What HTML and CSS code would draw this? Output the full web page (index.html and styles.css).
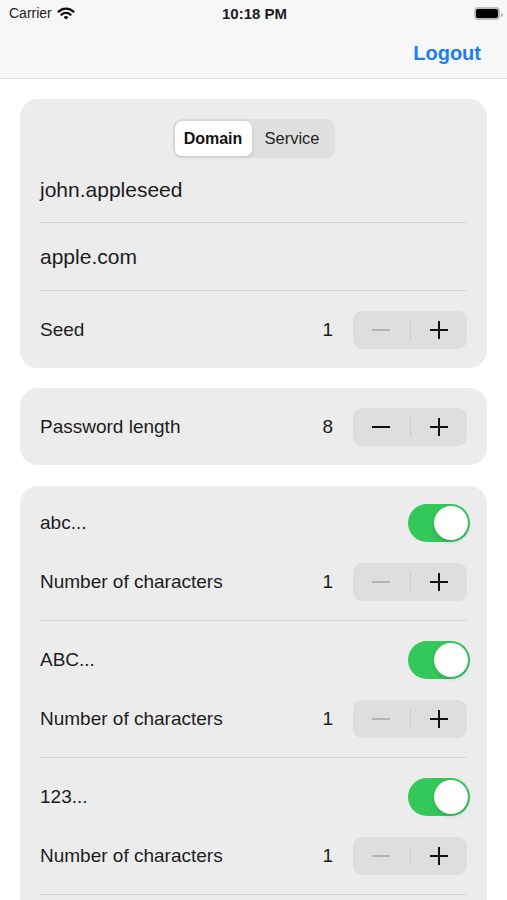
FILE: index.html
```html
<!DOCTYPE html>
<html lang="en">
<head>
  <meta charset="UTF-8" />
  <meta name="viewport" content="width=device-width, initial-scale=1.0"/>
  <title>Password Generator</title>
  <link rel="stylesheet" href="styles.css">
</head>
<body>

  <header class="topbar">
    <div class="status-bar">
      <div class="carrier">
        Carrier
        <svg class="wifi" width="18" height="13" viewBox="0 0 18 13">
          <path d="M1.6 4.6 A10.5 10.5 0 0 1 16.4 4.6" fill="none" stroke="#111" stroke-width="2.3" stroke-linecap="round"/>
          <path d="M4.5 7.6 A6.5 6.5 0 0 1 13.5 7.6" fill="none" stroke="#111" stroke-width="2.3" stroke-linecap="round"/>
          <path d="M9 12.6 L6.6 10.2 A3.4 3.4 0 0 1 11.4 10.2 Z" fill="#111"/>
        </svg>
      </div>
      <div class="clock">10:18 PM</div>
      <div class="battery"><span class="battery-fill"></span></div>
    </div>
    <nav class="nav-bar">
      <a class="logout" href="#">Logout</a>
    </nav>
  </header>

  <main class="content">

    <section class="card">
      <div class="segmented">
        <div class="segment selected">Domain</div>
        <div class="segment">Service</div>
      </div>
      <div class="field first">john.appleseed</div>
      <div class="field">apple.com</div>
      <div class="row stepper-row">
        <span class="label">Seed</span>
        <span class="value">1</span>
        <div class="stepper">
          <button class="step minus disabled"></button>
          <span class="step-divider"></span>
          <button class="step plus"></button>
        </div>
      </div>
    </section>

    <section class="card">
      <div class="row stepper-row">
        <span class="label">Password length</span>
        <span class="value">8</span>
        <div class="stepper">
          <button class="step minus"></button>
          <span class="step-divider"></span>
          <button class="step plus"></button>
        </div>
      </div>
    </section>

    <section class="card charsets">
      <div class="charset">
        <div class="row">
          <span class="label">abc...</span>
          <div class="toggle on"><span class="knob"></span></div>
        </div>
        <div class="row">
          <span class="label">Number of characters</span>
          <span class="value">1</span>
          <div class="stepper">
            <button class="step minus disabled"></button>
            <span class="step-divider"></span>
            <button class="step plus"></button>
          </div>
        </div>
      </div>
      <div class="charset">
        <div class="row">
          <span class="label">ABC...</span>
          <div class="toggle on"><span class="knob"></span></div>
        </div>
        <div class="row">
          <span class="label">Number of characters</span>
          <span class="value">1</span>
          <div class="stepper">
            <button class="step minus disabled"></button>
            <span class="step-divider"></span>
            <button class="step plus"></button>
          </div>
        </div>
      </div>
      <div class="charset">
        <div class="row">
          <span class="label">123...</span>
          <div class="toggle on"><span class="knob"></span></div>
        </div>
        <div class="row">
          <span class="label">Number of characters</span>
          <span class="value">1</span>
          <div class="stepper">
            <button class="step minus disabled"></button>
            <span class="step-divider"></span>
            <button class="step plus"></button>
          </div>
        </div>
      </div>
    </section>

  </main>

</body>
</html>
```

FILE: styles.css
```css
body {
  margin: 0;
  background: #fff;
  font-family: 'Liberation Sans', Arial, sans-serif;
  color: #1c1c1e;
  height: 900px;
  overflow: hidden;
}

/* top bar */

.topbar {
  background: #f7f7f7;
  border-bottom: 1px solid #dddddd;
}

.status-bar {
  height: 28px;
  display: flex;
  align-items: center;
  justify-content: space-between;
  padding: 0 7px 0 9px;
}

.carrier {
  display: flex;
  align-items: center;
  gap: 5px;
  font-size: 14px;
  width: 120px;
  margin-top: -2px;
}

.clock {
  font-size: 15px;
  font-weight: bold;
  margin-top: -2px;
}

.battery {
  width: 120px;
  display: flex;
  justify-content: flex-end;
  position: relative;
}

.battery::after {
  content: "";
  position: absolute;
  right: -3px;
  top: 5px;
  width: 2px;
  height: 4px;
  background: #b8b8b8;
  border-radius: 0 2px 2px 0;
}

.battery-fill {
  display: block;
  width: 22px;
  height: 9px;
  background: #000;
  border: 2px solid #bdbdbd;
  border-radius: 4px;
  margin-top: -1px;
}

.nav-bar {
  height: 50px;
  display: flex;
  align-items: center;
  justify-content: flex-end;
  padding-right: 26px;
}

.logout {
  color: #1a7ef2;
  text-decoration: none;
  font-size: 20px;
  font-weight: bold;
}

/* cards */

.content {
  padding: 20px 20px 0;
  display: flex;
  flex-direction: column;
  gap: 20px;
}

.card {
  background: #ececec;
  border-radius: 18px;
  padding: 0 20px;
}

.charsets {
  margin-top: 1px;
  padding-bottom: 40px;
}

.segmented {
  margin: 20px auto 0;
  width: 162px;
  height: 39px;
  background: #dfdfdf;
  border-radius: 9px;
  display: flex;
  align-items: center;
  padding: 0 2px;
  box-sizing: border-box;
}

.segment {
  flex: 1;
  height: 35px;
  display: flex;
  align-items: center;
  justify-content: center;
  font-size: 16.5px;
  color: #222;
}

.segment.selected {
  flex: 0 0 77px;
  background: #fff;
  border-radius: 7px;
  font-size: 16px;
  font-weight: bold;
  color: #111;
  box-shadow: 0 1px 4px rgba(0, 0, 0, 0.12);
}

.field {
  height: 67px;
  display: flex;
  align-items: center;
  font-size: 21px;
  border-bottom: 1px solid #d6d6d6;
}

.field.first {
  height: 64px;
}

.row {
  display: flex;
  align-items: center;
  font-size: 19px;
}

.stepper-row {
  height: 77px;
}

.label {
  flex: 1;
}

.value {
  margin-right: 20px;
}

/* stepper */

.stepper {
  width: 114px;
  height: 38px;
  background: #dedede;
  border-radius: 9px;
  display: flex;
  align-items: center;
}

.step {
  flex: 1;
  height: 100%;
  border: none;
  background: transparent;
  position: relative;
  padding: 0;
}

.step::before,
.step.plus::after {
  content: "";
  position: absolute;
  left: 50%;
  top: 50%;
  width: 18px;
  height: 2px;
  margin: -1px 0 0 -9px;
  background: #111;
}

.step.plus::after {
  transform: rotate(90deg);
}

.step.disabled::before {
  background: #b4b4b4;
}

.step-divider {
  width: 1px;
  height: 20px;
  background: #cacaca;
}

/* char sets */

.charset {
  padding: 18px 0 19px;
  border-bottom: 1px solid #d6d6d6;
  display: flex;
  flex-direction: column;
  gap: 21px;
}

.charset + .charset {
  padding-top: 20px;
}

.toggle {
  width: 62px;
  height: 38px;
  border-radius: 19px;
  background: #e2e2e2;
  position: relative;
  margin-right: -3px;
}

.toggle.on {
  background: #34c759;
}

.knob {
  position: absolute;
  top: 2px;
  right: 2px;
  width: 34px;
  height: 34px;
  border-radius: 50%;
  background: #fff;
  box-shadow: 0 2px 4px rgba(0, 0, 0, 0.15);
}
```
